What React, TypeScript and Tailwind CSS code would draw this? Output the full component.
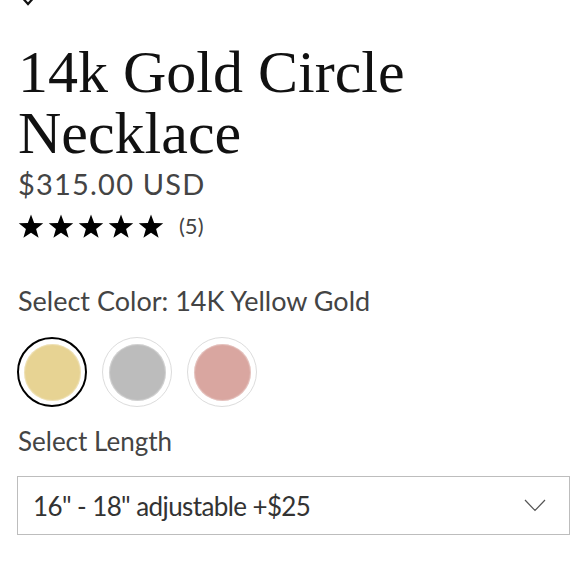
import React from "react";

const Star = () => (
  <svg width="26" height="25" viewBox="0 0 24 23" className="block">
    <polygon
      points="12,0.5 14.9,8.3 23.3,8.6 16.7,13.8 19,21.9 12,17.2 5,21.9 7.3,13.8 0.7,8.6 9.1,8.3"
      fill="#000"
    />
  </svg>
);

const Swatch = ({ color, selected }: { color: string; selected?: boolean }) => (
  <div
    className={
      selected
        ? "w-[70px] h-[70px] rounded-full border-2 border-black flex items-center justify-center"
        : "w-[70px] h-[70px] rounded-full border-[1.5px] border-[#dcdcdc] flex items-center justify-center"
    }
  >
    <div className="w-[57px] h-[57px] rounded-full" style={{ backgroundColor: color, boxShadow: "inset 0 0 1px 1px rgba(255,255,255,0.35)" }} />
  </div>
);

export default function App() {
  const body = { fontFamily: "Lato, 'Open Sans', sans-serif" };
  return (
    <div className="w-[580px] h-[580px] bg-white overflow-hidden relative">
      <div className="h-[6px] relative">
        <svg width="40" height="6" className="absolute left-0 top-0">
          <path d="M23.5 -1 L28 4 L32.5 -1" stroke="#111" strokeWidth="2.2" fill="none" />
        </svg>
      </div>
      <div className="pl-[18px] pr-[10px]">
        <h1
          className="mt-[36px] text-[60px] leading-[61px] text-[#111]"
          style={{ fontFamily: "'Liberation Serif', 'DejaVu Serif', serif" }}
        >
          14k Gold Circle
          <br />
          Necklace
        </h1>
        <div className="mt-[3px] text-[29px] leading-[34px] tracking-[1.2px] text-[#444]" style={body}>
          $315.00 USD
        </div>
        <div className="mt-[12px] h-[26px] flex items-center">
          <div className="flex gap-[4px]">
            <Star />
            <Star />
            <Star />
            <Star />
            <Star />
          </div>
          <span className="ml-[15px] text-[22px] leading-[26px] text-[#444]" style={body}>
            (5)
          </span>
        </div>
        <div className="mt-[45px] text-[27px] leading-[34px] text-[#444]" style={body}>
          Select Color: 14K Yellow Gold
        </div>
        <div className="mt-[19px] flex gap-[15px] -ml-[1px]">
          <Swatch color="#e7d393" selected />
          <Swatch color="#bcbcbc" />
          <Swatch color="#d9a6a0" />
        </div>
        <div className="mt-[17px] text-[26px] leading-[34px] text-[#444]" style={body}>
          Select Length
        </div>
        <div className="mt-[18px] -ml-[1px] h-[59px] border-[1.5px] border-[#bdbdbd] flex items-center justify-between pl-[15px] pr-[23px]">
          <span className="text-[26px] leading-[34px] tracking-[-0.6px] text-[#333]" style={body}>
            16" - 18" adjustable +$25
          </span>
          <svg width="22" height="13" viewBox="0 0 22 13">
            <path d="M1 1 L11 11.5 L21 1" stroke="#555" strokeWidth="1.2" fill="none" />
          </svg>
        </div>
      </div>
    </div>
  );
}
